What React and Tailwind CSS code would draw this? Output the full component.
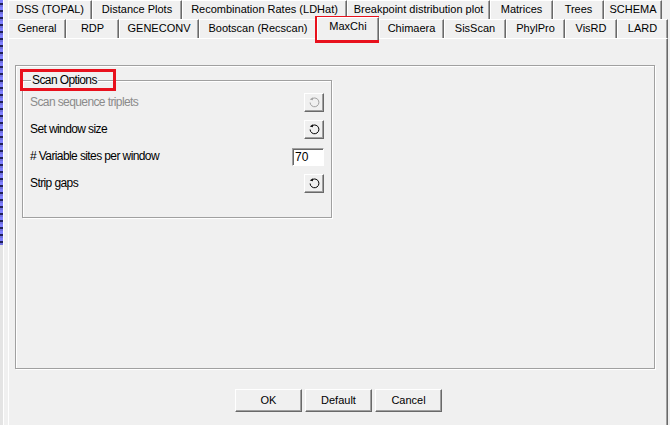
import React from 'react';

const topTabs = [
  { label: 'DSS (TOPAL)', w: 'w-[84px]' },
  { label: 'Distance Plots', w: 'w-[90px]' },
  { label: 'Recombination Rates (LDHat)', w: 'w-[165px]' },
  { label: 'Breakpoint distribution plot', w: 'w-[143px]' },
  { label: 'Matrices', w: 'w-[63px]' },
  { label: 'Trees', w: 'w-[51px]' },
  { label: 'SCHEMA', w: 'w-[58px]' },
];

const bottomTabs = [
  { label: 'General', w: 'w-[58px]' },
  { label: 'RDP', w: 'w-[53px]' },
  { label: 'GENECONV', w: 'w-[80px]' },
  { label: 'Bootscan (Recscan)', w: 'w-[118px]' },
  { label: 'MaxChi', w: 'w-[62px]', active: true },
  { label: 'Chimaera', w: 'w-[65px]' },
  { label: 'SisScan', w: 'w-[62px]' },
  { label: 'PhylPro', w: 'w-[59px]' },
  { label: 'VisRD', w: 'w-[52px]' },
  { label: 'LARD', w: 'w-[51px]' },
];

function Tab({ label, w, active }) {
  if (active) {
    return (
      <div className={`${w} relative z-10 -mt-[2px] h-[23px] shrink-0 border-t border-l border-r border-t-white border-l-white border-r-[#696969] bg-[#f0f0f0] pt-[2px] text-center shadow-[inset_-1px_0_0_#a0a0a0]`}>
        {label}
      </div>
    );
  }
  return (
    <div className={`${w} h-[19px] shrink-0 border-t border-l border-r border-t-white border-l-white border-r-[#696969] pt-[2px] text-center shadow-[inset_-1px_0_0_#a0a0a0]`}>
      {label}
    </div>
  );
}

function UndoIcon({ disabled }) {
  const c = disabled ? '#a0a0a0' : '#000';
  return (
    <svg width="11" height="11" viewBox="0 0 11 11" fill="none">
      <path d="M3.4 1.5 A4.4 4.4 0 1 1 1.1 5.5" stroke={c} strokeWidth="1" />
      <polygon points="0.8,2.6 3.8,0.3 3.9,3.3" fill={c} />
    </svg>
  );
}

function IconButton({ disabled }) {
  return (
    <button className="flex h-[19px] w-[20px] items-center justify-center border border-t-white border-l-white border-r-[#696969] border-b-[#696969] bg-[#f0f0f0] shadow-[inset_-1px_-1px_0_#a0a0a0]">
      <UndoIcon disabled={disabled} />
    </button>
  );
}

function Row({ label, disabled, children }) {
  return (
    <div className="flex h-[19px] items-center justify-between">
      <span className={`-mt-[2px] ${disabled ? 'text-[#8b8b8b]' : 'text-black'}`}>{label}</span>
      {children}
    </div>
  );
}

function DlgButton({ children }) {
  return (
    <button className="flex h-[23px] w-[67px] items-center justify-center border border-t-white border-l-white border-r-[#696969] border-b-[#696969] bg-[#f0f0f0] text-[11px] text-black shadow-[inset_-1px_-1px_0_#a0a0a0]">
      {children}
    </button>
  );
}

export default function App() {
  return (
    <div className="relative flex h-[425px] w-[670px] overflow-hidden bg-[#f0f0f0] font-['Liberation_Sans',Arial,sans-serif] text-black">
      {/* window behind */}
      <div className="flex w-[3px] flex-col">
        <div className="h-[245px] bg-[repeating-linear-gradient(180deg,#8080ff_0px,#8080ff_3px,#20205a_3px,#20205a_5px,#7070e0_5px,#7070e0_7px)]" />
        <div className="flex-1 bg-[#e4e4e4]" />
      </div>
      <div className="w-px bg-white" />

      <div className="flex flex-1 flex-col">
        {/* tabs */}
        <div className="flex flex-col pl-[4px] text-[11px] leading-[13px]">
          <div className="flex h-[19px]">
            {topTabs.map((t) => (
              <Tab key={t.label} {...t} />
            ))}
          </div>
          <div className="flex h-[19px]">
            {bottomTabs.map((t) => (
              <Tab key={t.label} {...t} />
            ))}
          </div>
        </div>

        {/* page */}
        <div className="ml-[4px] mr-[2px] flex flex-1 flex-col border-t border-l border-r border-t-white border-l-white border-r-[#696969] shadow-[inset_-1px_0_0_#a0a0a0]">
          <div className="ml-[6px] mt-[26px] h-[304px] w-[640px] border border-[#a0a0a0] shadow-[inset_1px_1px_0_#fff,1px_1px_0_#fff]">
            <div className="relative ml-[6px] mt-[14px] h-[138px] w-[310px] border border-[#a0a0a0] text-[12px] leading-[14px] tracking-[-0.6px] shadow-[inset_1px_1px_0_#fff,1px_1px_0_#fff]">
              <span className="absolute -top-[8px] left-[8px] bg-[#f0f0f0] px-px">Scan Options</span>
              <div className="flex flex-col gap-[8px] pl-[7px] pr-[7px] pt-[12px]">
                <Row label="Scan sequence triplets" disabled>
                  <IconButton disabled />
                </Row>
                <Row label="Set window size">
                  <IconButton />
                </Row>
                <Row label="# Variable sites per window">
                  <div className="flex h-[18px] w-[32px] items-center border-t border-l border-r border-b border-t-[#a0a0a0] border-l-[#a0a0a0] border-r-white border-b-white bg-white pl-[2px] tracking-normal shadow-[inset_1px_1px_0_#696969]">
                    70
                  </div>
                </Row>
                <Row label="Strip gaps">
                  <IconButton />
                </Row>
              </div>
            </div>
          </div>

          <div className="mt-[20px] flex justify-center gap-[3px] pl-[1px]">
            <DlgButton>OK</DlgButton>
            <DlgButton>Default</DlgButton>
            <DlgButton>Cancel</DlgButton>
          </div>
        </div>
      </div>

      {/* annotation boxes */}
      <div className="absolute left-[315px] top-[16px] h-[27px] w-[64px] border-[3px] border-[#e8111d]" />
      <div className="absolute left-[20px] top-[69px] h-[22px] w-[96px] border-[3px] border-[#e8111d]" />
    </div>
  );
}
